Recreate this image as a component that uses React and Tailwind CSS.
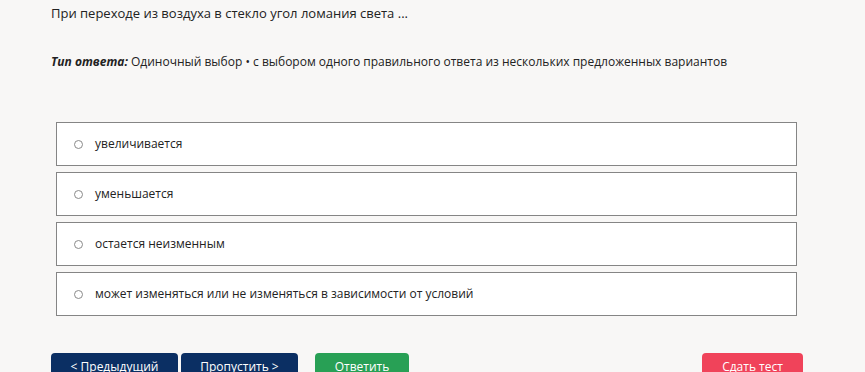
import React, { useState } from 'react';

const options = [
  'увеличивается',
  'уменьшается',
  'остается неизменным',
  'может изменяться или не изменяться в зависимости от условий',
];

const App = () => {
  const [selected, setSelected] = useState(null);

  return (
    <div className="min-h-screen bg-[#f8f7f6] text-[#222] font-['Open_Sans',sans-serif] overflow-hidden">
      <div className="pl-[51px] pr-[68px] pt-[3px]">
        {/* Вопрос */}
        <p className="text-[13px] leading-[20px]">
          При переходе из воздуха в стекло угол ломания света ...
        </p>

        <p className="mt-[30px] text-[12px] leading-[18px]">
          <b className="italic font-bold">Тип ответа:</b> Одиночный выбор • с выбором одного правильного ответа из нескольких предложенных вариантов
        </p>

        {/* Варианты ответа */}
        <div className="mt-[51px] ml-[5px] flex flex-col gap-[6px]">
          {options.map((text, i) => (
            <label
              key={i}
              className="h-[44px] bg-white border border-[#858585] flex items-center pl-[17px] cursor-pointer"
            >
              <input
                type="radio"
                name="answer"
                checked={selected === i}
                onChange={() => setSelected(i)}
                className="w-[9px] h-[9px] m-0 appearance-none rounded-full border border-[#8a8a8a] bg-white checked:bg-[#0b2f63]"
              />
              <span className="ml-[12px] text-[12px]">{text}</span>
            </label>
          ))}
        </div>

        {/* Кнопки */}
        <div className="mt-[37px] flex items-start">
          <button className="w-[127px] h-[28px] rounded-[4px] bg-[#0b2f63] text-white text-[12px]">
            &lt; Предыдущий
          </button>
          <button className="ml-[3px] w-[117px] h-[28px] rounded-[4px] bg-[#0b2f63] text-white text-[12px]">
            Пропустить &gt;
          </button>
          <button className="ml-[17px] w-[94px] h-[28px] rounded-[4px] bg-[#28a055] text-white text-[12px]">
            Ответить
          </button>
          <button className="ml-auto mr-[-6px] w-[101px] h-[28px] rounded-[4px] bg-[#f0435a] text-white text-[12px]">
            Сдать тест
          </button>
        </div>
      </div>
    </div>
  );
};

export default App;
